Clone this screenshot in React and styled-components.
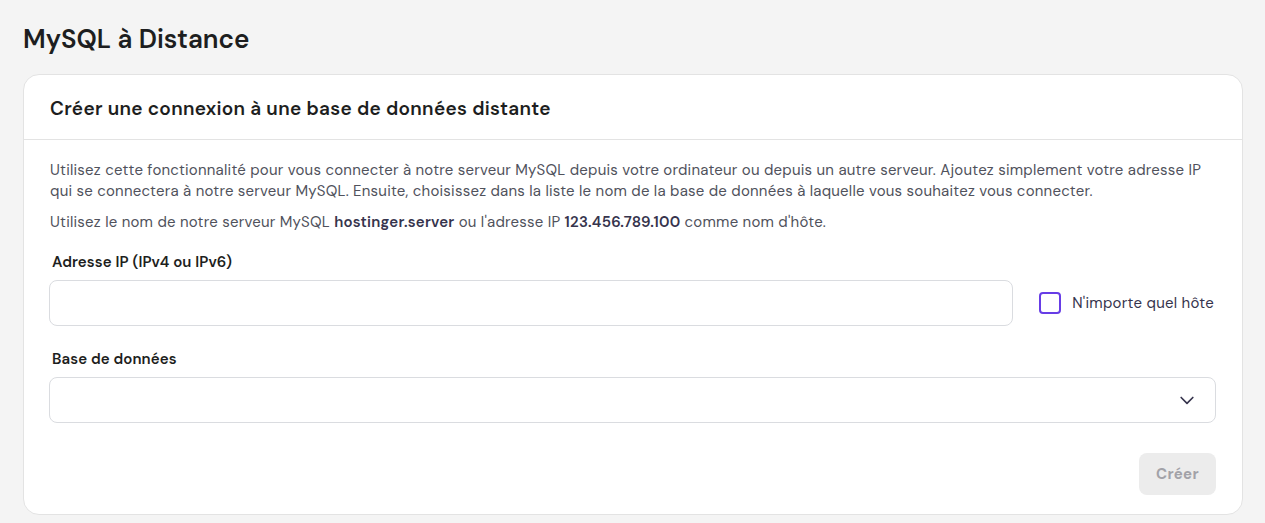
import styled, { createGlobalStyle } from "styled-components";

const GlobalStyle = createGlobalStyle`
  html, body {
    margin: 0;
    background-color: #f4f4f4;
    font-family: "DM Sans", Inter, "Liberation Sans", sans-serif;
    color: #1d1e20;
  }
`;

const Page = styled.div`
  padding: 22px 22px 8px 23px;
`;

const Title = styled.h1`
  margin: 0 0 18px;
  font-size: 26px;
  line-height: 34px;
  font-weight: 600;
`;

const Card = styled.section`
  background-color: #fff;
  border: 1px solid #e3e3e3;
  border-radius: 16px;
`;

const CardHeader = styled.header`
  padding: 21px 26px 18px;
  border-bottom: 1px solid #e3e3e3;
`;

const CardTitle = styled.h2`
  margin: 0;
  font-size: 19px;
  line-height: 25px;
  font-weight: 600;
  letter-spacing: 0.3px;
`;

const CardBody = styled.div`
  padding: 20px 26px 19px;
`;

const Text = styled.p`
  margin: 0 0 10px;
  font-size: 15px;
  line-height: 21px;
  color: #50525c;
  letter-spacing: 0.22px;

  strong {
    color: #36344d;
    font-weight: 600;
  }
`;

const Label = styled.label`
  display: block;
  margin: ${(p) => (p.$first ? "18px" : "22px")} 0 7px 2px;
  font-size: 15px;
  line-height: 22px;
  font-weight: 600;
  letter-spacing: 0.1px;
`;

const Row = styled.div`
  display: flex;
  align-items: center;
  gap: 26px;
`;

const Field = styled.div`
  flex: 1;
  height: 44px;
  border: 1px solid #dadce0;
  border-radius: 8px;
  display: flex;
  align-items: center;
  justify-content: flex-end;
  padding: 0 18px;
  margin-left: -1px;
`;

const Check = styled.label`
  display: flex;
  align-items: center;
  gap: 11px;
  margin-right: 2px;
  font-size: 15px;
  color: #36344d;
  letter-spacing: 0.25px;
`;

const Box = styled.span`
  width: 18px;
  height: 18px;
  border: 2px solid #673de6;
  border-radius: 4px;
`;

const Footer = styled.div`
  display: flex;
  justify-content: flex-end;
  margin-top: 30px;
`;

const Button = styled.button`
  width: 77px;
  height: 42px;
  border: none;
  border-radius: 8px;
  background-color: #ececec;
  color: #a2a2a8;
  font-family: inherit;
  font-size: 15px;
  font-weight: 700;
  letter-spacing: 0.3px;
`;

function Chevron() {
  return (
    <svg width="20" height="20" viewBox="0 0 24 24" fill="none" stroke="#36344d" strokeWidth="2" strokeLinecap="round" strokeLinejoin="round">
      <path d="M5 9l7 7 7-7" />
    </svg>
  );
}

export default function App() {
  return (
    <Page>
      <GlobalStyle />
      <Title>MySQL à Distance</Title>
      <Card>
        <CardHeader>
          <CardTitle>Créer une connexion à une base de données distante</CardTitle>
        </CardHeader>
        <CardBody>
          <Text>
            Utilisez cette fonctionnalité pour vous connecter à notre serveur MySQL depuis votre ordinateur ou depuis un autre serveur. Ajoutez simplement votre adresse IP qui se connectera à notre serveur MySQL. Ensuite, choisissez dans la liste le nom de la base de données à laquelle vous souhaitez vous connecter.
          </Text>
          <Text>
            Utilisez le nom de notre serveur MySQL <strong>hostinger.server</strong> ou l'adresse IP <strong>123.456.789.100</strong> comme nom d'hôte.
          </Text>
          <Label $first>Adresse IP (IPv4 ou IPv6)</Label>
          <Row>
            <Field />
            <Check>
              <Box />
              N'importe quel hôte
            </Check>
          </Row>
          <Label>Base de données</Label>
          <Field>
            <Chevron />
          </Field>
          <Footer>
            <Button>Créer</Button>
          </Footer>
        </CardBody>
      </Card>
    </Page>
  );
}
